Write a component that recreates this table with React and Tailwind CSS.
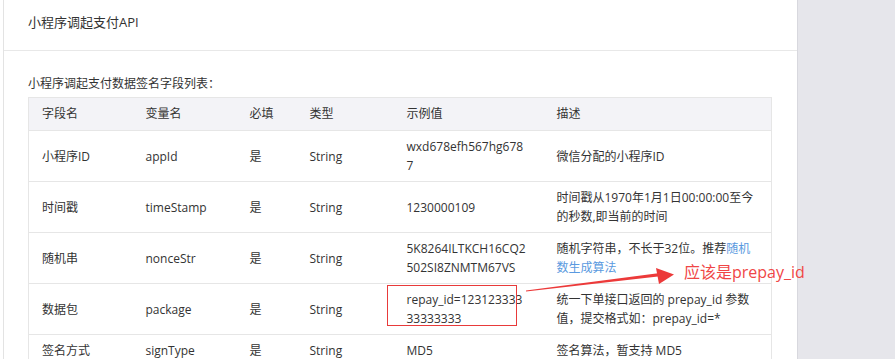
const rows = [
  {
    name: '小程序ID',
    key: 'appId',
    example: ['wxd678efh567hg678', '7'],
    desc: ['微信分配的小程序ID'],
  },
  {
    name: '时间戳',
    key: 'timeStamp',
    example: ['1230000109'],
    desc: ['时间戳从1970年1月1日00:00:00至今', '的秒数,即当前的时间'],
  },
  {
    name: '随机串',
    key: 'nonceStr',
    example: ['5K8264ILTKCH16CQ2', '502SI8ZNMTM67VS'],
    desc: [
      <>随机字符串，不长于32位。推荐<span className="text-[#5a9ae0]">随机</span></>,
      <span className="text-[#5a9ae0]">数生成算法</span>,
    ],
  },
  {
    name: '数据包',
    key: 'package',
    example: ['repay_id=123123333', '33333333'],
    desc: ['统一下单接口返回的 prepay_id 参数', '值，提交格式如：prepay_id=*'],
  },
  {
    name: '签名方式',
    key: 'signType',
    example: ['MD5'],
    desc: ['签名算法，暂支持 MD5'],
  },
]

function Lines({ items }) {
  return items.map((line, i) => (
    <div key={i} className="h-[19px] whitespace-nowrap">
      {line}
    </div>
  ))
}

export default function App() {
  const th = 'px-[13px] py-[6px] text-left font-normal border-b border-[#e6e6e6]'
  const td = 'px-[13px] py-[6px] align-middle border-b border-[#e6e6e6]'

  return (
    <div className="relative h-[359px] w-[895px] overflow-hidden flex bg-white text-[#333] font-['Open_Sans','Noto_Sans_CJK_SC',sans-serif]">
      <div className="w-[3px] bg-white" />
      <div className="w-[795px] bg-white border-l border-r border-l-[#e3e3e3] border-r-[#d8d8de]">
        <div className="h-[51px] border-b border-[#e8e8e8] pl-[24px] pt-[13px] text-[13px] leading-[19px]">
          小程序调起支付API
        </div>
        <div className="pl-[24px] pt-[23px]">
          <div className="h-[19px] text-[12px] leading-[19px] mb-[4px]">小程序调起支付数据签名字段列表：</div>
          <table className="table-fixed border-collapse border border-[#e6e6e6] text-[12px] leading-[19px] w-[743px]">
            <colgroup>
              <col className="w-[104px]" />
              <col className="w-[104px]" />
              <col className="w-[60px]" />
              <col className="w-[97px]" />
              <col className="w-[150px]" />
              <col className="w-[228px]" />
            </colgroup>
            <thead className="bg-[#f3f3f7]">
              <tr>
                {['字段名', '变量名', '必填', '类型', '示例值', '描述'].map((h) => (
                  <th key={h} className={th}>
                    <div className="h-[20px] leading-[20px]">{h}</div>
                  </th>
                ))}
              </tr>
            </thead>
            <tbody>
              {rows.map((r) => (
                <tr key={r.key}>
                  <td className={td}>
                    <Lines items={[r.name]} />
                  </td>
                  <td className={td}>
                    <Lines items={[r.key]} />
                  </td>
                  <td className={td}>
                    <Lines items={['是']} />
                  </td>
                  <td className={td}>
                    <Lines items={['String']} />
                  </td>
                  <td className={td}>
                    <Lines items={r.example} />
                  </td>
                  <td className={td}>
                    <Lines items={r.desc} />
                  </td>
                </tr>
              ))}
            </tbody>
          </table>
        </div>
      </div>
      <div className="flex-1 bg-[#e6e6eb]" />

      {/* annotation overlay */}
      <div className="absolute left-[387px] top-[285px] w-[130px] h-[41px] border border-[#e83a3a]" />
      <svg className="absolute left-0 top-0" width="895" height="359">
        <polygon points="526,290.6 658,273.3 658,276.6 526,291.6" fill="#ec3a3a" />
        <polygon points="656,268 674,274.5 659,284" fill="#ec3a3a" />
      </svg>
      <div className="absolute left-[684px] top-[261px] text-[16px] leading-[22px] text-[#f04646] whitespace-nowrap">
        应该是prepay_id
      </div>
    </div>
  )
}
